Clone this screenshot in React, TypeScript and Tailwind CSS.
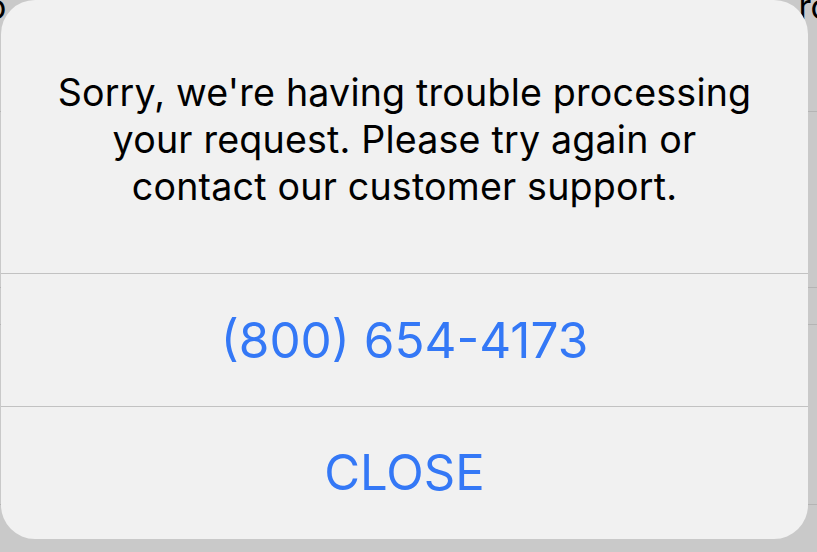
const sf = { fontFamily: "Inter, 'Noto Sans', sans-serif" };

function BackgroundRows() {
  // content of the screen behind the alert, mostly hidden
  return (
    <div className="flex h-full w-full flex-col bg-[#c9c9c9] text-[34px] leading-none text-black">
      <div className="flex h-[112px] items-start justify-between border-b border-[#b4b4b4] px-0">
        <span className="-ml-[14px] -mt-[10px]">o</span>
        <span className="-mr-[14px] -mt-[10px]">ro</span>
      </div>
      <div className="h-[176px] border-b border-[#b4b4b4]" />
      <div className="h-[37px] border-b border-[#b4b4b4]" />
      <div className="h-[180px] border-b border-[#b4b4b4]" />
    </div>
  );
}

export default function App() {
  return (
    <div className="relative h-[552px] w-[817px] overflow-hidden bg-[#c9c9c9]" style={sf}>
      <BackgroundRows />
      <div className="absolute left-[1px] top-0 flex h-[539px] w-[807px] flex-col overflow-hidden rounded-[34px] bg-[#f1f1f1] antialiased">
        <div className="flex h-[273px] items-center justify-center px-8 pt-[6px] text-center text-[37.6px] leading-[47px] tracking-[0.2px] text-black">
          <p>
            Sorry, we're having trouble processing
            <br />
            your request. Please try again or
            <br />
            contact our customer support.
          </p>
        </div>
        <button
          type="button"
          className="flex h-[133px] items-center justify-center border-t border-[#c2c2c2] text-[49.5px] text-[#3478f6]"
        >
          (800) 654-4173
        </button>
        <button
          type="button"
          className="flex h-[133px] items-center justify-center border-t border-[#c2c2c2] text-[49px] text-[#3478f6]"
        >
          CLOSE
        </button>
      </div>
    </div>
  );
}
